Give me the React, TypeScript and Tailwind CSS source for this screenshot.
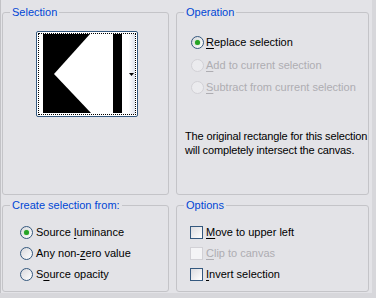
import type { ReactNode } from "react";

const FONT = "font-['Liberation_Sans','Arial',sans-serif]";

function Radio({ checked = false, disabled = false }: { checked?: boolean; disabled?: boolean }) {
  return (
    <span
      className={
        "relative flex h-[13px] w-[13px] shrink-0 items-center justify-center rounded-full border " +
        (disabled
          ? "border-[#d2d1d6] bg-[#ebebee]"
          : "border-[#34587e] bg-gradient-to-br from-[#d8d8dc] to-white")
      }
    >
      {checked && <span className="h-[5px] w-[5px] rounded-full bg-[#26a326] shadow-[0_0_1px_#5fd35f]" />}
    </span>
  );
}

function Check({ disabled = false }: { disabled?: boolean }) {
  return (
    <span
      className={
        "h-[13px] w-[13px] shrink-0 border " +
        (disabled
          ? "border-[#d2d1d6] bg-[#f4f4f6]"
          : "border-[#34587e] bg-gradient-to-br from-[#dcdce0] to-white")
      }
    />
  );
}

// label with one underlined access-key letter
function Label({ pre, key_, post, disabled }: { pre: string; key_: string; post: string; disabled?: boolean }) {
  return (
    <span className={"whitespace-nowrap " + (disabled ? "text-[#aeadb2]" : "text-black")}>
      {pre}
      <span className="underline underline-offset-[2px]">{key_}</span>
      {post}
    </span>
  );
}

function Group({ title, className, children }: { title: string; className: string; children: ReactNode }) {
  return (
    <fieldset className={"rounded-[3px] border border-[#c4c4c8] " + className}>
      <legend className="ml-[7px] px-[2px] text-[11px] leading-[13px] text-[#0046d5]">{title}</legend>
      {children}
    </fieldset>
  );
}

export default function App() {
  return (
    <div className={"h-[298px] w-[376px] bg-[#d7d7db] " + FONT}>
      <div className="h-[293px] w-[372px] border-l border-[#c2c2c6] bg-[#e3e3e7] pl-[1px] pt-[6px]">
        <div className="grid grid-cols-[167px_193px] grid-rows-[189px_93px] gap-x-[7px] gap-y-[4px] text-[11px] leading-[13px]">
          {/* Selection */}
          <Group title="Selection" className="h-[189px]">
            <div className="ml-[33px] mt-[12px] h-[86px] w-[102px] rounded-[2px] border border-[#34587e] bg-white p-[1px]">
              <div className="flex h-full w-full border border-dotted border-black pl-[4px]">
                <svg width="79" height="79" viewBox="0 0 79 79" className="shrink-0">
                  <rect width="79" height="79" fill="#000" />
                  <polygon points="47,0 70,0 70,79 48,79 11,40" fill="#fff" />
                </svg>
                <div className="flex flex-1 items-center justify-end bg-gradient-to-r from-white via-white to-[#dfe4ee] pr-[1px]">
                  <svg width="5" height="3" viewBox="0 0 5 3">
                    <polygon points="0,0 5,0 2.5,3" fill="#000" />
                  </svg>
                </div>
              </div>
            </div>
          </Group>

          {/* Operation */}
          <Group title="Operation" className="h-[189px]">
            <div className="flex flex-col pl-[14px] pt-[17px]">
              <div className="flex h-[23px] items-start gap-[2px]">
                <Radio checked />
                <Label pre="" key_="R" post="eplace selection" />
              </div>
              <div className="flex h-[22px] items-start gap-[2px]">
                <Radio disabled />
                <Label pre="" key_="A" post="dd to current selection" disabled />
              </div>
              <div className="flex h-[22px] items-start gap-[2px]">
                <Radio disabled />
                <Label pre="" key_="S" post="ubtract from current selection" disabled />
              </div>
            </div>
            <p className="mt-[26px] whitespace-nowrap pl-[8px] leading-[14px] tracking-[-0.15px] text-black">
              The original rectangle for this selection
              <br />
              will completely intersect the canvas.
            </p>
          </Group>

          {/* Create selection from */}
          <Group title="Create selection from:" className="h-[93px]">
            <div className="flex flex-col pl-[17px] pt-[14px]">
              <div className="flex h-[21px] items-start gap-[3px]">
                <Radio checked />
                <Label pre="Source " key_="l" post="uminance" />
              </div>
              <div className="flex h-[21px] items-start gap-[3px]">
                <Radio />
                <Label pre="Any non-" key_="z" post="ero value" />
              </div>
              <div className="flex h-[21px] items-start gap-[3px]">
                <Radio />
                <Label pre="S" key_="o" post="urce opacity" />
              </div>
            </div>
          </Group>

          {/* Options */}
          <Group title="Options" className="h-[93px]">
            <div className="flex flex-col pl-[13px] pt-[14px]">
              <div className="flex h-[21px] items-start gap-[3px]">
                <Check />
                <Label pre="" key_="M" post="ove to upper left" />
              </div>
              <div className="flex h-[21px] items-start gap-[3px]">
                <Check disabled />
                <Label pre="" key_="C" post="lip to canvas" disabled />
              </div>
              <div className="flex h-[21px] items-start gap-[3px]">
                <Check />
                <Label pre="" key_="I" post="nvert selection" />
              </div>
            </div>
          </Group>
        </div>
      </div>
    </div>
  );
}
